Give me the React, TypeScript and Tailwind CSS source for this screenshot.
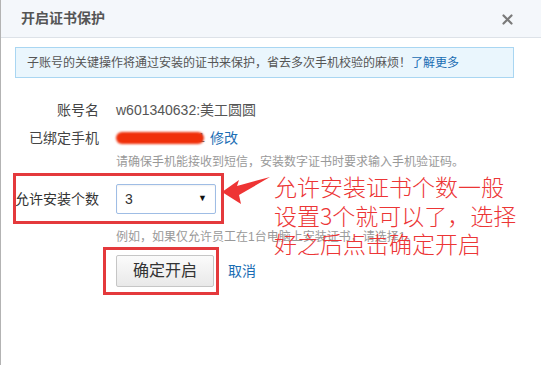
const font = "font-['Liberation_Sans','Noto_Sans_CJK_SC',sans-serif]";

function Row({ label, children }: { label: string; children: React.ReactNode }) {
  return (
    <div className="flex h-[28px] items-center">
      <div className="w-[98px] text-right text-[14px] text-[#444]">{label}</div>
      <div className="ml-[17px] flex items-center text-[14px] text-[#555]">{children}</div>
    </div>
  );
}

export default function App() {
  return (
    <div className={`relative h-[365px] w-[541px] overflow-hidden border-l border-[#b3b3b3] bg-white ${font}`}>
      {/* header */}
      <div className="flex h-[38px] items-center justify-between border-b border-[#dde2e8] bg-[#f4f7fb] pl-[20px] pr-[28px]">
        <h1 className="text-[14px] font-bold text-[#555]">开启证书保护</h1>
        <svg width="11" height="11" viewBox="0 0 11 11" className="mt-[1px]">
          <path d="M1.5 1.5 L9.5 9.5 M9.5 1.5 L1.5 9.5" stroke="#7a7a7a" strokeWidth="2.2" strokeLinecap="round" />
        </svg>
      </div>

      {/* notice */}
      <div className="ml-[14px] mt-[9px] flex h-[31px] w-[499px] items-center border border-[#a9d6f2] bg-[#eaf6fd] pl-[11px] text-[12px] text-[#555]">
        子账号的关键操作将通过安装的证书来保护，省去多次手机校验的麻烦！
        <span className="text-[#1a6db3]">了解更多</span>
      </div>

      {/* form */}
      <div className="mt-[18px]">
        <Row label="账号名">w601340632:美工圆圆</Row>
        <Row label="已绑定手机">
          <span className="relative inline-block h-[14px] w-[90px]">
            <span className="absolute right-[1px] top-0 text-[13px] leading-[14px] text-[#666]">1</span>
            <span className="absolute left-0 top-[1px] h-[12px] w-[88px] rounded-full bg-[#f0300a] blur-[1px]" />
          </span>
          <span className="ml-[4px] text-[#1e6fb5]">修改</span>
        </Row>
        <div className="ml-[115px] flex h-[20px] items-center text-[12px] text-[#999]">
          请确保手机能接收到短信，安装数字证书时要求输入手机验证码。
        </div>
        <div className="mt-[12px] flex h-[30px] items-center">
          <div className="w-[98px] text-right text-[14px] text-[#333]">允许安装个数</div>
          <div className="ml-[17px] flex h-[30px] w-[100px] items-center justify-between rounded-[2px] border border-[#9fbde5] pl-[8px] pr-[8px] text-[14px] text-[#333] shadow-[inset_0_1px_2px_rgba(0,0,0,0.06)]">
            <span>3</span>
            <span className="text-[9px] text-[#111]">▼</span>
          </div>
        </div>
        <div className="ml-[115px] mt-[14px] flex h-[18px] items-center text-[12px] text-[#999]">
          例如，如果仅允许员工在1台电脑上安装证书，请选择1。
        </div>
        <div className="ml-[115px] mt-[9px] flex items-center">
          <button className="h-[32px] w-[98px] rounded-[2px] border border-[#c6c6c6] bg-gradient-to-b from-[#fbfbfb] to-[#e9e9e9] text-[16px] text-[#333]">
            确定开启
          </button>
          <span className="ml-[14px] text-[14px] text-[#1a6db3]">取消</span>
        </div>
      </div>

      {/* annotations */}
      <div className="absolute left-[12px] top-[173px] h-[51px] w-[211px] border-[3px] border-[#e4393c]" />
      <div className="absolute left-[102px] top-[247px] h-[48px] w-[116px] border-[3px] border-[#e4393c]" />
      <svg className="absolute left-0 top-0" width="541" height="365">
        <polygon points="221,192 238,180 236,186 269,177 238,195 240,204" fill="#ee3434" />
      </svg>
      <div className="absolute left-[273px] top-[172px] font-['Noto_Sans_CJK_SC',sans-serif] text-[23px] font-light leading-[28.5px] text-[#ec3535]">
        <div>允许安装证书个数一般</div>
        <div>设置3个就可以了，选择</div>
        <div>好之后点击确定开启</div>
      </div>
    </div>
  );
}
